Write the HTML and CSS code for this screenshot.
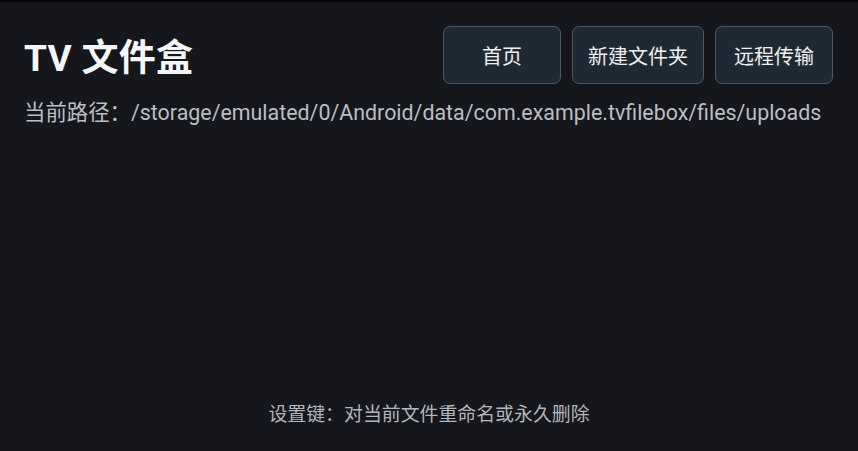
FILE: index.html
```html
<!DOCTYPE html>
<html lang="zh">
<head>
<meta charset="utf-8">
<link rel="stylesheet" href="styles.css">
</head>
<body>
<div class="screen">
  <header class="top">
    <h1 class="title">TV 文件盒</h1>
    <nav class="actions">
      <button class="btn btn-home">首页</button>
      <button class="btn">新建文件夹</button>
      <button class="btn btn-remote">远程传输</button>
    </nav>
  </header>
  <div class="path">当前路径：/storage/emulated/0/Android/data/com.example.tvfilebox/files/uploads</div>
  <main class="list"></main>
  <footer class="hint">设置键：对当前文件重命名或永久删除</footer>
</div>
</body>
</html>
```
FILE: styles.css
```css
html, body {
  margin: 0;
  padding: 0;
  background: #15171c;
}
.screen {
  width: 858px;
  height: 451px;
  box-sizing: border-box;
  border-top: 2px solid #050608;
  background: #15171c;
  display: flex;
  flex-direction: column;
  font-family: Roboto, "Noto Sans CJK SC", sans-serif;
  color: #f2f3f5;
  padding: 0 25px 0 24px;
}
.top {
  display: flex;
  align-items: center;
  justify-content: space-between;
  margin-top: 24px;
  height: 58px;
}
.title {
  margin: 0;
  font-size: 37px;
  font-weight: 700;
  color: #f5f6f8;
  letter-spacing: 0.3px;
}
.actions {
  display: flex;
  gap: 11px;
}
.btn {
  height: 58px;
  box-sizing: border-box;
  padding: 0 15px;
  background: #1f2934;
  border: 1.5px solid #4d5864;
  border-radius: 7px;
  color: #eef0f2;
  font-family: Roboto, "Noto Sans CJK SC", sans-serif;
  font-size: 20px;
}
.btn-home { width: 118px; }
.btn-remote { width: 118px; }
.path {
  margin-top: 11px;
  font-size: 21.4px;
  color: #babec5;
  white-space: nowrap;
}
.list {
  flex: 1;
}
.hint {
  text-align: center;
  font-size: 18.9px;
  color: #b3b6bd;
  margin-bottom: 25px;
  padding-left: 1px;
}
```
